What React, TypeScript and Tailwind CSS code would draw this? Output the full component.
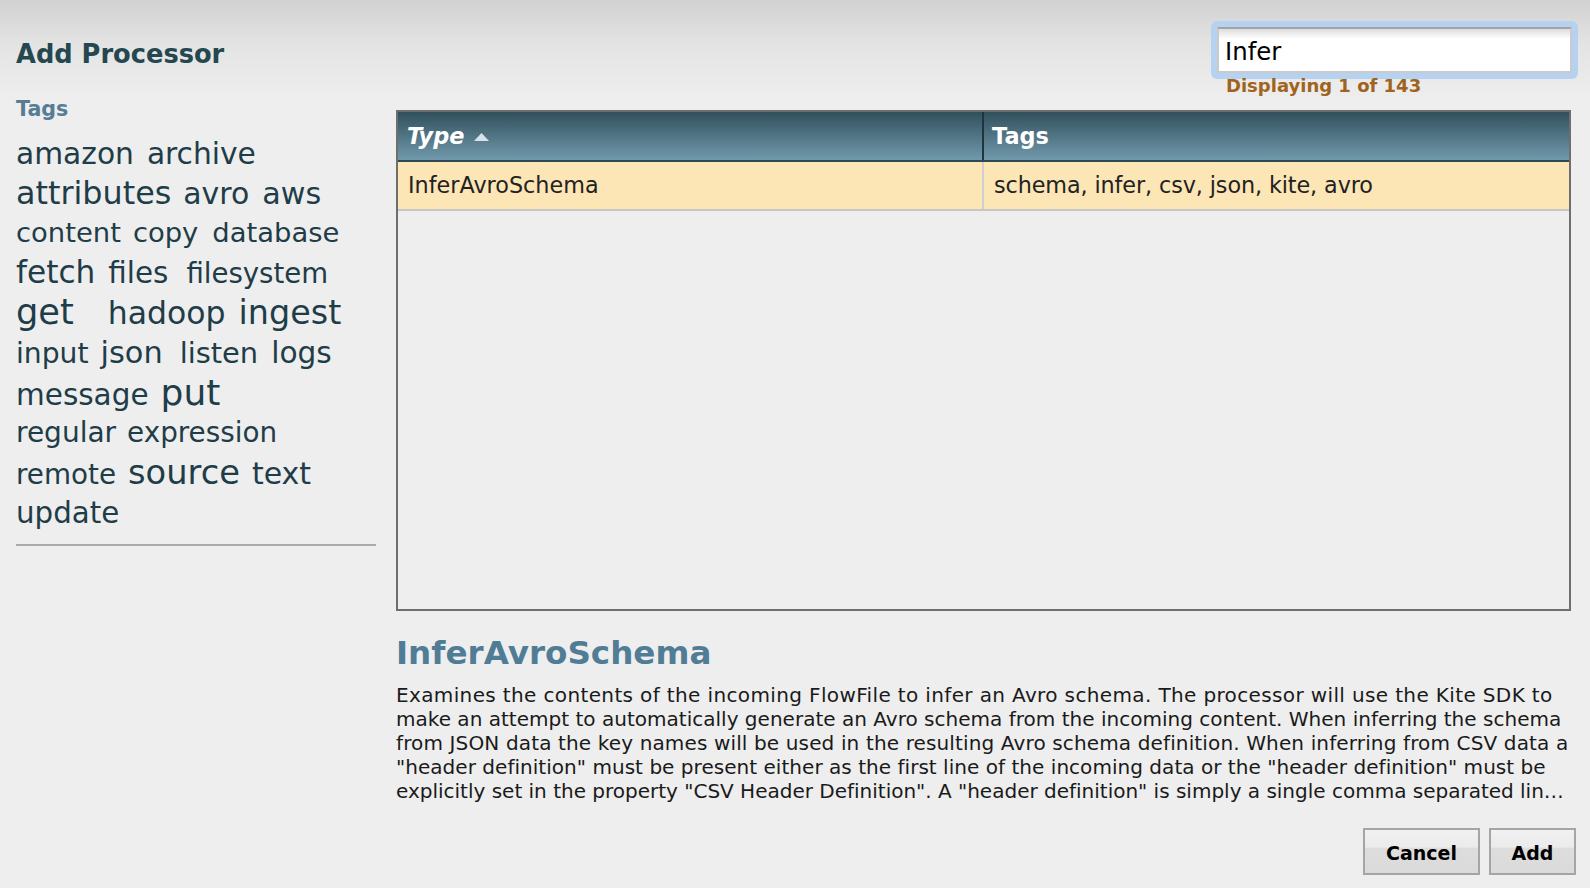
import React from "react";

type Word = { t: string; c: string };
type Row = { h: string; words: Word[] };

const rows: Row[] = [
  { h: "h-[38px]", words: [
    { t: "amazon", c: "text-[29.7px]" },
    { t: "archive", c: "text-[29.7px] ml-[13px]" },
  ] },
  { h: "h-[42px]", words: [
    { t: "attributes", c: "text-[31.8px]" },
    { t: "avro", c: "text-[29.9px] ml-[12px]" },
    { t: "aws", c: "text-[30.2px] ml-[13px]" },
  ] },
  { h: "h-[38px]", words: [
    { t: "content", c: "text-[27.4px]" },
    { t: "copy", c: "text-[27.4px] ml-[12px]" },
    { t: "database", c: "text-[27.4px] ml-[14px]" },
  ] },
  { h: "h-[37px]", words: [
    { t: "fetch", c: "text-[31.2px]" },
    { t: "files", c: "text-[29.4px] ml-[13px]" },
    { t: "filesystem", c: "text-[27.6px] ml-[18px]" },
  ] },
  { h: "h-[44px]", words: [
    { t: "get", c: "text-[35.2px]" },
    { t: "hadoop", c: "text-[31.5px] ml-[34px]" },
    { t: "ingest", c: "text-[33.4px] ml-[13px]" },
  ] },
  { h: "h-[37px]", words: [
    { t: "input", c: "text-[28.2px]" },
    { t: "json", c: "text-[30.4px] ml-[12px]" },
    { t: "listen", c: "text-[28.9px] ml-[17px]" },
    { t: "logs", c: "text-[29.6px] ml-[13px]" },
  ] },
  { h: "h-[44px]", words: [
    { t: "message", c: "text-[29.5px]" },
    { t: "put", c: "text-[36px] ml-[12px]" },
  ] },
  { h: "h-[37px]", words: [
    { t: "regular", c: "text-[28px]" },
    { t: "expression", c: "text-[27.8px] ml-[11px]" },
  ] },
  { h: "h-[43px]", words: [
    { t: "remote", c: "text-[27.8px]" },
    { t: "source", c: "text-[33.7px] ml-[12px]" },
    { t: "text", c: "text-[30px] ml-[12px]" },
  ] },
  { h: "h-[46px]", words: [
    { t: "update", c: "text-[29.3px]" },
  ] },
];

const descLines: { t: string; c: string }[] = [
  { t: "Examines the contents of the incoming FlowFile to infer an Avro schema. The processor will use the Kite SDK to", c: "tracking-[0.35px]" },
  { t: "make an attempt to automatically generate an Avro schema from the incoming content. When inferring the schema", c: "" },
  { t: "from JSON data the key names will be used in the resulting Avro schema definition. When inferring from CSV data a", c: "tracking-[0.12px]" },
  { t: "\"header definition\" must be present either as the first line of the incoming data or the \"header definition\" must be", c: "tracking-[0.02px]" },
  { t: "explicitly set in the property \"CSV Header Definition\". A \"header definition\" is simply a single comma separated lin…", c: "tracking-[-0.02px]" },
];

export default function App() {
  return (
    <div className="w-[1590px] h-[888px] overflow-hidden bg-[linear-gradient(to_bottom,#d1d1d1_0px,#e4e4e4_45px,#eeeeee_100px)] font-['DejaVu_Sans',sans-serif] flex">
      {/* Left column */}
      <div className="ml-[16px] w-[360px] flex flex-col">
        <div className="mt-[39px] h-[30px] leading-[30px] text-[25.7px] font-bold text-[#25474f] whitespace-nowrap">
          Add Processor
        </div>
        <div className="mt-[28px] h-[24px] leading-[24px] text-[20.6px] font-bold text-[#557d94]">
          Tags
        </div>
        <div className="mt-[18px] flex flex-col text-[#1f3d48]">
          {rows.map((r, i) => (
            <div key={i} className={`${r.h} flex items-start`}>
              <div className="flex items-baseline">
                {r.words.map((w) => (
                  <span key={w.t} className={`${w.c} leading-none whitespace-nowrap`}>
                    {w.t}
                  </span>
                ))}
              </div>
            </div>
          ))}
        </div>
        <div className="mt-[-1px] h-[2px] bg-[#a9a9a9] w-[360px]" />
      </div>

      {/* Right column */}
      <div className="ml-[20px] w-[1175px] flex flex-col">
        <div className="self-end mr-[-7px] w-[367px] mt-[21px] flex flex-col">
          <div className="p-[6px] rounded-[6px] bg-[#b5d3f0]">
            <div className="h-[46px] border-2 border-[#cacaca] border-t-[#a3a3a3] bg-[linear-gradient(to_bottom,#dcdcdc_0px,#ffffff_10px)] pl-[6px] pt-[4px] flex items-center text-[24.4px] text-black">
              Infer
            </div>
          </div>
          <div className="mt-[-2px] ml-[15px] h-[18px] leading-[18px] text-[18px] font-bold text-[#a0631d] whitespace-nowrap">
            Displaying 1 of 143
          </div>
        </div>

        {/* Table */}
        <div className="mt-[15px] h-[501px] border-2 border-[#6e6e6e] flex flex-col">
          <div className="h-[50px] flex border-b-2 border-[#2c4954] bg-[linear-gradient(to_bottom,#31505c,#7199ac)] text-white font-bold text-[22.4px] leading-[48px]">
            <div className="w-[586px] pl-[9px] flex items-center border-r-2 border-[#1e3540]">
              <span className="italic">Type</span>
              <svg width="15" height="8" viewBox="0 0 15 8" className="ml-[10px] mt-[2px]">
                <polygon points="7.5,0 15,8 0,8" fill="#d6e3ea" />
              </svg>
            </div>
            <div className="flex-1 pl-[8px]">Tags</div>
          </div>
          <div className="h-[49px] flex bg-[#fde6b6] border-b-2 border-[#c6c6c6] text-[22.3px] text-[#222222] leading-[47px]">
            <div className="w-[586px] pl-[10px] border-r-2 border-[#cfcfcf] whitespace-nowrap">InferAvroSchema</div>
            <div className="flex-1 pl-[10px] whitespace-nowrap tracking-[-0.1px]">schema, infer, csv, json, kite, avro</div>
          </div>
        </div>

        {/* Description */}
        <div className="mt-[23px] h-[38px] leading-[38px] text-[32.6px] font-bold text-[#517c95]">
          InferAvroSchema
        </div>
        <div className="mt-[11px] text-[20.05px] leading-[24px] text-[#1a1a1a]">
          {descLines.map((l, i) => (
            <div key={i} className={`whitespace-nowrap ${l.c}`}>{l.t}</div>
          ))}
        </div>

        {/* Buttons */}
        <div className="mt-[25px] self-end mr-[-5px] flex gap-[9px]">
          <button className="w-[117px] h-[47px] pt-[3px] border-2 border-[#a5a5a5] bg-[linear-gradient(to_bottom,#f1f1f1_0%,#ebebeb_40%,#dddddd_42%,#dadada_100%)] text-[19px] font-bold text-black">
            Cancel
          </button>
          <button className="w-[87px] h-[47px] pt-[3px] border-2 border-[#a5a5a5] bg-[linear-gradient(to_bottom,#f1f1f1_0%,#ebebeb_40%,#dddddd_42%,#dadada_100%)] text-[19px] font-bold text-black">
            Add
          </button>
        </div>
      </div>
    </div>
  );
}
